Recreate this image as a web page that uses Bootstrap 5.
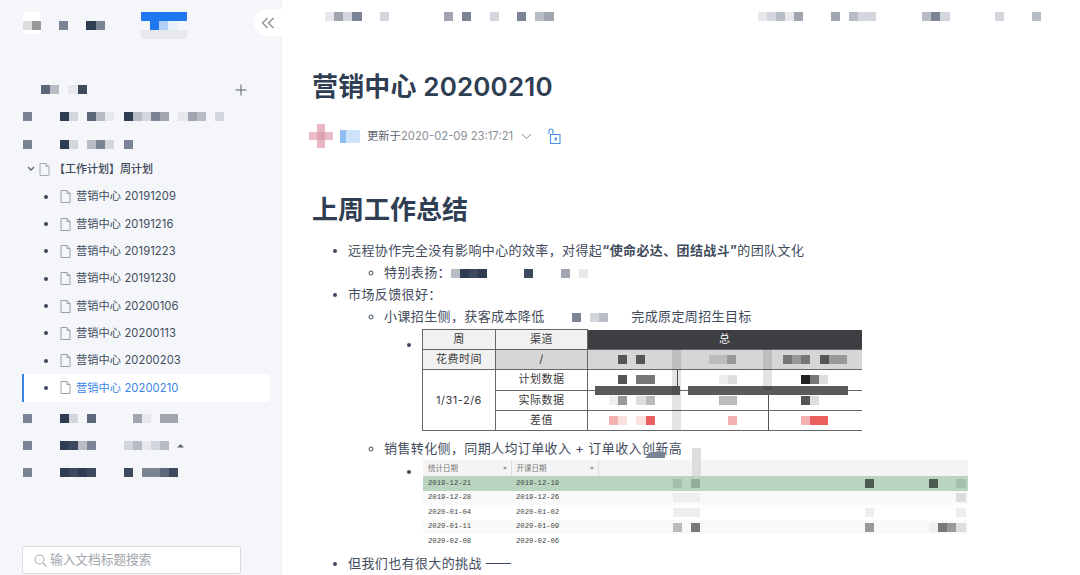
<!DOCTYPE html>
<html lang="zh">
<head>
<meta charset="utf-8">
<title>营销中心 20200210</title>
<link href="https://cdn.jsdelivr.net/npm/bootstrap@5.3.0/dist/css/bootstrap.min.css" rel="stylesheet">
<style>
html,body{height:575px;overflow:hidden}
body{font-family:Inter,"Noto Sans CJK SC",sans-serif;color:#3f4b5c;background:#fff}
.mz{display:flex;flex:none;height:9px}
.mz i{display:block;flex:none;width:9.15px;height:9px}
.c1{background:#e6e8ec}.c2{background:#d3d6dc}.c3{background:#b8bcc5}.c4{background:#a0a5b0}
.c5{background:#7b8494}.c6{background:#5c6779}.c7{background:#3d4a5e}.c8{background:#2f3d52}
.ca{background:#eee}.cb{background:#ddd}.cd{background:#bbb}.ce{background:#999}.cf{background:#777}.cg{background:#555}.ch{background:#222}
.cp{background:#fbe0e0}.cq{background:#f3b1b1}.cr{background:#e9605f}
.cu{background:#1e78f0}.cv{background:#aed0fb}.cw{background:#e8f0fc}
.cx{background:#a3c0ab}.cy{background:#8fae98}.cz{background:#4d5a50}
.side{width:282px;background:#f4f6f9;border-right:1px solid #eef0f3;height:575px}
.brand{height:76px;padding:12px 0 0 23px}
.logo-box{width:18px;height:22px;background:#fff;padding-top:9px}
.logo-box .mz{width:18px}
.brand-words{margin:9px 0 0 18px}
.brand-mark{left:141px;top:12px}
.fold{right:-1px;top:9px;width:28px;height:27px;background:#fff;border-radius:14px 0 0 14px}
.tree-row{height:27.3px;padding-left:23px}
.tree-head{padding-left:41px;height:27.3px;padding-right:34px}
.tree-open{margin-top:-3px;height:28.3px;padding-left:27px;font-size:11px;font-weight:500;color:#3a4658}
.tree-open span{margin-left:4px}
.doc{font-size:11.2px;color:#414d5f;padding-left:44px;letter-spacing:.1px}
.doc::before{content:"";width:4px;height:4px;border-radius:50%;background:#3a4658;flex:none;margin-right:12px}
.doc span{margin-left:5px}
.doc.on{color:#3a84e6;background:#fff;width:248px;margin-left:22px;padding-left:20px;border-left:2px solid #3a84e6}
.after-on{margin-top:3px}
.find{width:219px;height:28px;margin:0 0 1px 22px;padding:0 0 0 11px;border:1px solid #d8dbe0;border-radius:3px;background:#fff;font-size:12.7px;color:#a2a6ad;gap:3px}
.page{padding-left:30px;height:575px;overflow:hidden}
.topbar{height:33px;padding:12px 39px 0 13px}
.doc-title{font-size:26px;line-height:36px;font-weight:600;color:#2f3e52;margin:36px 0 0;letter-spacing:.15px}
.meta{height:24px;margin:19px 0 0 -3px;font-size:11.3px;color:#8a9099}
.meta b{font-weight:400;color:#5a6470}
.ava-cross{width:24px;height:24px;background:linear-gradient(#d9a3b0,#d9a3b0) center/8px 8px no-repeat,linear-gradient(#e9b6c4,#e9b6c4) center/8px 100% no-repeat,linear-gradient(#ebbcc9,#ebbcc9) center/100% 8px no-repeat}
.ava-blue{width:20px;height:13px;margin:0 7px;background:linear-gradient(90deg,#8fbdf4 30%,#cfe3fb 30%)}
.sec-title{font-size:26px;line-height:36px;font-weight:600;color:#2f3e52;margin:44px 0 11px}
.doc-list,.doc-list ul{margin:0;padding:0}
.doc-list{font-size:13px;line-height:22px;color:#3f4b5c;padding-left:36px;letter-spacing:.38px}
.doc-list ul{padding-left:36px}
.doc-list>li>ul>li>ul{padding-left:38px;list-style:disc}
.mz-in{display:inline-flex;vertical-align:-1px}
.dim-gap{margin:0 23px 0 18px}
.sheet1{width:439px;height:101px;position:relative;margin:2px 0 7px;letter-spacing:0}
.sheet1 table{width:439px;table-layout:fixed;border-collapse:collapse;font-size:11px;color:#3a3a3a;line-height:1;letter-spacing:.5px}
.sheet1 td,.sheet1 th{border:1px solid #666;padding:0;height:20.2px;text-align:center;vertical-align:middle;font-weight:400}
.shade-h{background:#f1f1f1}
.shade-m{background:#d6d6d6}
.sheet1 th.dark-h{background:#3c3e42;color:#fff;border:0}
.sheet1 td.mc{text-align:left;border-left-color:transparent;border-right:0}
.sheet1 td.lined{border-left-color:#555}
.o30{padding-left:30px!important}.o31{padding-left:31px!important}.o14{padding-left:14px!important}
.m21{margin-left:21px}.m32{margin-left:32px}.m41{margin-left:41px}.m50{margin-left:50px}
.band{position:absolute;background:#5a5a5a;top:57px;height:9px}
.band-a{left:173px;width:85px}.band-b{left:266px;width:160px}
.stripe{position:absolute;width:9px;background:#000;opacity:.11}
.st-a{left:250px;top:20px;height:81px}.st-b{left:341px;top:20px;height:41px}
.sheet2{width:545px;position:relative;margin:1px 0 3px 1px;letter-spacing:0}
.sheet2 table{width:545px;table-layout:fixed;border-collapse:collapse;font:7.2px/1 "Liberation Mono",monospace;color:#444}
.sheet2 td{height:14.6px;padding:0 0 0 5px;vertical-align:middle;border:0}
.sheet2 tr.hd td{height:16px;background:#f4f4f4;color:#777;font-family:"Noto Sans CJK SC",sans-serif;font-size:7.5px;border-right:1px solid #ddd}
.sheet2 tr.hd td:last-child{border-right:0}
.sheet2 tr.gr td{background:#b9d5c0}
.sheet2 tr.ze td{background:#f9f9f9}
.sheet2 td.mc{padding-left:0}
.m75{margin-left:75px}
.drop{float:right;margin:3px 4px 0 0;border:2.5px solid transparent;border-top:3px solid #999;border-bottom:0}
.over-a{position:absolute;left:269px;top:-12px;width:9px;height:28px;background:#ddd}
.smudge{position:absolute;left:222px;top:-8px;width:20px;height:6px;background:#7b8494;clip-path:polygon(30% 0,100% 0,100% 100%,0 100%)}
.dash{letter-spacing:-1px}
</style>
</head>
<body class="d-flex">
<aside class="side d-flex flex-column flex-shrink-0 position-relative">
  <div class="brand d-flex">
    <div class="logo-box flex-shrink-0"><div class="mz" data-m="be"></div></div>
    <div class="mz brand-words" data-m="5..85"></div>
  </div>
  <div class="fold position-absolute d-flex align-items-center justify-content-center">
    <svg width="14" height="12" viewBox="0 0 14 12" fill="none" stroke="#8b8f96" stroke-width="1.3"><path d="M6.500 1 1.500 6l5 5M12.500 1l-5 5 5 5"/></svg>
  </div>
  <div class="position-absolute brand-mark">
    <div class="mz" data-m="uuuuu"></div>
    <div class="mz" data-m=".uvw"></div>
    <div class="mz" data-m="11111"></div>
  </div>
  <div class="tree-head d-flex align-items-center justify-content-between">
    <div class="mz" data-m="63.17"></div>
    <svg width="12" height="12" viewBox="0 0 12 12" stroke="#5c6470" stroke-width="1"><path d="M6 .5v11M.5 6h11"/></svg>
  </div>
  <div class="tree-row d-flex align-items-center"><div class="mz" data-m="5...82.631.83254.143.2"></div></div>
  <div class="tree-row d-flex align-items-center"><div class="mz" data-m="5...82.352.5"></div></div>
  <div class="tree-row tree-open d-flex align-items-center">
    <svg width="8" height="6" viewBox="0 0 8 6" fill="none" stroke="#5c6470" stroke-width="1.3"><path d="m1 1 3 3 3-3"/></svg>
    <svg class="ms-1" width="11" height="13" viewBox="0 0 11 13" fill="none" stroke="#a6abb3"><path d="M1 .5h6l3 3v9H1zM7 .5v3h3"/></svg>
    <span>【工作计划】周计划</span>
  </div>
  <div class="tree-row doc d-flex align-items-center"><svg width="11" height="13" viewBox="0 0 11 13" fill="none" stroke="#9aa0a9"><path d="M1 .5h6l3 3v9H1zM7 .5v3h3"/></svg><span>营销中心 20191209</span></div>
  <div class="tree-row doc d-flex align-items-center"><svg width="11" height="13" viewBox="0 0 11 13" fill="none" stroke="#9aa0a9"><path d="M1 .5h6l3 3v9H1zM7 .5v3h3"/></svg><span>营销中心 20191216</span></div>
  <div class="tree-row doc d-flex align-items-center"><svg width="11" height="13" viewBox="0 0 11 13" fill="none" stroke="#9aa0a9"><path d="M1 .5h6l3 3v9H1zM7 .5v3h3"/></svg><span>营销中心 20191223</span></div>
  <div class="tree-row doc d-flex align-items-center"><svg width="11" height="13" viewBox="0 0 11 13" fill="none" stroke="#9aa0a9"><path d="M1 .5h6l3 3v9H1zM7 .5v3h3"/></svg><span>营销中心 20191230</span></div>
  <div class="tree-row doc d-flex align-items-center"><svg width="11" height="13" viewBox="0 0 11 13" fill="none" stroke="#9aa0a9"><path d="M1 .5h6l3 3v9H1zM7 .5v3h3"/></svg><span>营销中心 20200106</span></div>
  <div class="tree-row doc d-flex align-items-center"><svg width="11" height="13" viewBox="0 0 11 13" fill="none" stroke="#9aa0a9"><path d="M1 .5h6l3 3v9H1zM7 .5v3h3"/></svg><span>营销中心 20200113</span></div>
  <div class="tree-row doc d-flex align-items-center"><svg width="11" height="13" viewBox="0 0 11 13" fill="none" stroke="#9aa0a9"><path d="M1 .5h6l3 3v9H1zM7 .5v3h3"/></svg><span>营销中心 20200203</span></div>
  <div class="tree-row doc on d-flex align-items-center"><svg width="11" height="13" viewBox="0 0 11 13" fill="none" stroke="#9aa0a9"><path d="M1 .5h6l3 3v9H1zM7 .5v3h3"/></svg><span>营销中心 20200210</span></div>
  <div class="tree-row after-on d-flex align-items-center"><div class="mz" data-m="5...82.6....41.44"></div></div>
  <div class="tree-row d-flex align-items-center"><div class="mz" data-m="5...8735...23123"></div><svg class="ms-2" width="7" height="4" viewBox="0 0 7 4" fill="#5c6470"><path d="M0 3.500 3.500 0 7 3.500z"/></svg></div>
  <div class="tree-row d-flex align-items-center"><div class="mz" data-m="5...8787...7.5567"></div></div>
  <div class="find mt-auto d-flex align-items-center">
    <svg width="13" height="13" viewBox="0 0 13 13" fill="none" stroke="#aab0b7" stroke-width="1.1"><circle cx="5.500" cy="5.500" r="4.500"/><path d="m9 9 3.500 3.500"/></svg>
    <span>输入文档标题搜索</span>
  </div>
</aside>
<main class="page flex-fill">
  <div class="topbar d-flex justify-content-between">
    <div class="mz" data-m="1425..2......4.5..2..5.34"></div>
    <div class="mz" data-m="12314...4.322.....352.....2...3"></div>
  </div>
  <h1 class="doc-title">营销中心 20200210</h1>
  <div class="meta d-flex align-items-center">
    <div class="ava-cross flex-shrink-0"></div>
    <div class="ava-blue flex-shrink-0"></div>
    <b>更新于</b><span>2020-02-09 23:17:21</span>
    <svg class="ms-2" width="11" height="7" viewBox="0 0 11 7" fill="none" stroke="#8a9099"><path d="m1 1 4.500 4.500L10 1"/></svg>
    <svg class="ms-3" width="13" height="16" viewBox="0 0 13 16" fill="none" stroke="#4a90e2" stroke-width="1.1"><path d="M1 6V3a2 2 0 0 1 4 0v3M2.500 6.500h9.500v9H2.500z"/><path d="M7.200 10h1v2h-1z"/></svg>
  </div>
  <h2 class="sec-title">上周工作总结</h2>
  <ul class="doc-list">
    <li>远程协作完全没有影响中心的效率，对得起<strong>“使命必达、团结战斗”</strong>的团队文化
      <ul>
        <li>特别表扬：<span class="mz mz-in" data-m="3878....7...4.1"></span></li>
      </ul>
    </li>
    <li>市场反馈很好：
      <ul>
        <li>小课招生侧，获客成本降低<span class="mz mz-in dim-gap" data-m=".5.23"></span>完成原定周招生目标
          <ul>
            <li>
              <div class="sheet1">
                <table>
                  <colgroup><col style="width:73px"><col style="width:92px"><col style="width:90px"><col style="width:91px"><col style="width:93px"></colgroup>
                  <tr><th class="shade-h">周</th><th class="shade-h">渠道</th><th class="dark-h" colspan="3">总</th></tr>
                  <tr class="shade-m"><td class="shade-h">花费时间</td><td>/</td>
                    <td class="mc o30"><div class="mz" data-m="g.g"></div></td>
                    <td class="mc o31"><div class="mz" data-m="dde"></div></td>
                    <td class="mc o14"><div class="mz" data-m="fef.gee"></div></td></tr>
                  <tr><td rowspan="3">1/31-2/6</td><td>计划数据</td>
                    <td class="mc o30"><div class="mz" data-m="g.ff"></div></td>
                    <td class="mc lined"><div class="mz m41" data-m="ab"></div></td>
                    <td class="mc"><div class="mz m32" data-m="hfb"></div></td></tr>
                  <tr><td>实际数据</td>
                    <td class="mc"><div class="mz m21" data-m="ae.bd"></div></td>
                    <td class="mc"><div class="mz m41" data-m="dd"></div></td>
                    <td class="mc lined"><div class="mz m32" data-m="gb"></div></td></tr>
                  <tr><td>差值</td>
                    <td class="mc"><div class="mz m21" data-m="qp.pr"></div></td>
                    <td class="mc"><div class="mz m50" data-m="q"></div></td>
                    <td class="mc lined"><div class="mz m32" data-m="qrr"></div></td></tr>
                </table>
                <div class="band band-a"></div>
                <div class="band band-b"></div>
                <div class="stripe st-a"></div>
                <div class="stripe st-b"></div>
              </div>
            </li>
          </ul>
        </li>
        <li>销售转化侧，同期人均订单收入 + 订单收入创新高
          <ul>
            <li>
              <div class="sheet2">
                <table>
                  <colgroup><col style="width:88px"><col style="width:87px"><col></colgroup>
                  <tr class="hd"><td>统计日期<i class="drop"></i></td><td>开课日期<i class="drop"></i></td><td class="mc"></td></tr>
                  <tr class="gr"><td>2019-12-21</td><td>2019-12-19</td><td class="mc"><div class="mz m75" data-m="x.y..................z......z..x"></div></td></tr>
                  <tr class="ze"><td>2019-12-28</td><td>2019-12-26</td><td class="mc"><div class="mz m75" data-m="aaa............................b"></div></td></tr>
                  <tr><td>2020-01-04</td><td>2020-01-02</td><td class="mc"><div class="mz m75" data-m="aaa..................a.........a"></div></td></tr>
                  <tr class="ze"><td>2020-01-11</td><td>2020-01-09</td><td class="mc"><div class="mz m75" data-m="d.f..................e......afeb"></div></td></tr>
                  <tr><td>2020-02-08</td><td>2020-02-06</td><td class="mc"></td></tr>
                </table>
                <div class="over-a"></div>
                <div class="smudge"></div>
              </div>
            </li>
          </ul>
        </li>
      </ul>
    </li>
    <li>但我们也有很大的挑战 <span class="dash">——</span></li>
  </ul>
</main>
<script src="https://cdn.jsdelivr.net/npm/bootstrap@5.3.0/dist/js/bootstrap.bundle.min.js"></script>
<script>
document.querySelectorAll('[data-m]').forEach(function(el){
  el.innerHTML = el.getAttribute('data-m').split('').map(function(ch){
    return ch === '.' ? '<i></i>' : '<i class="c' + ch + '"></i>';
  }).join('');
});
</script>
</body>
</html>
